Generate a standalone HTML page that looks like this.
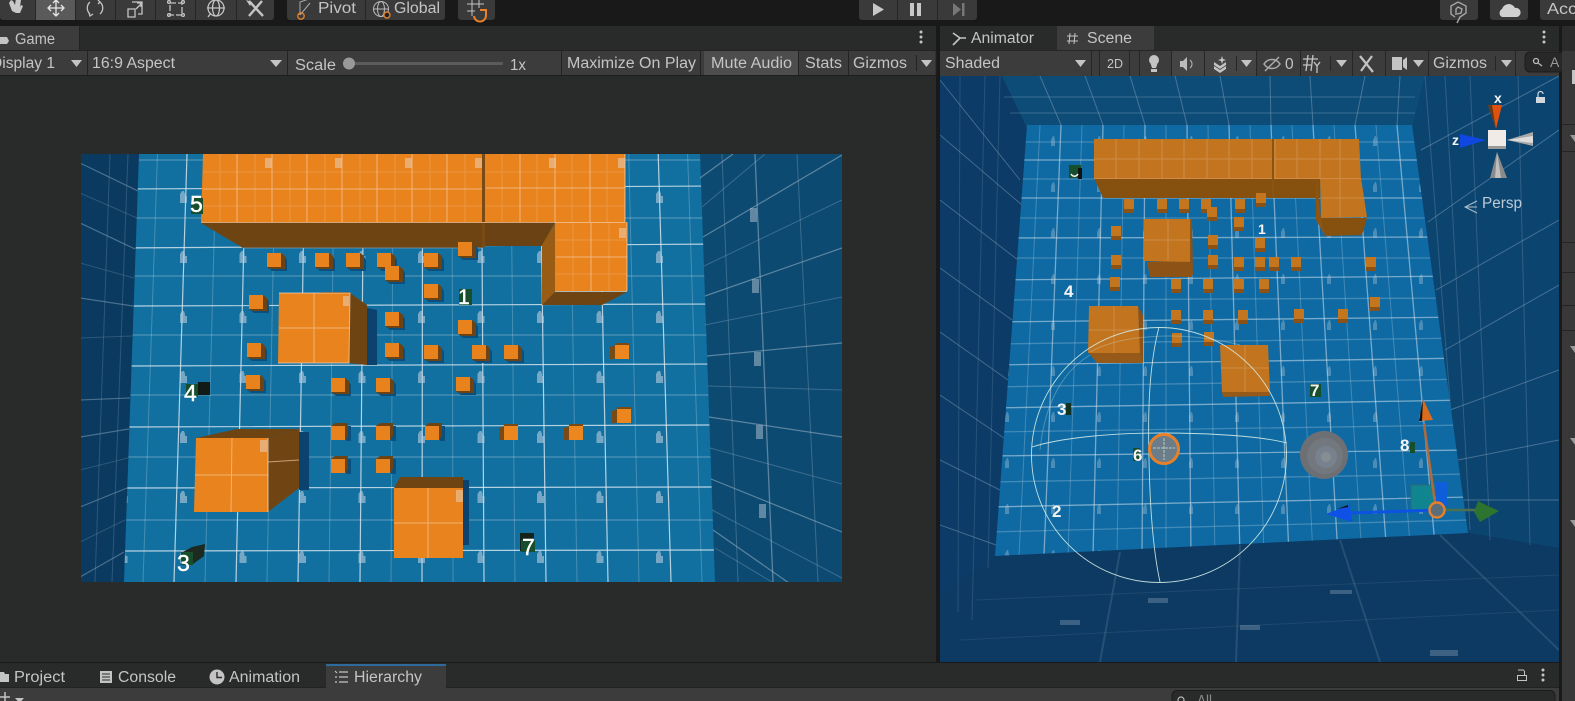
<!DOCTYPE html>
<html><head><meta charset="utf-8"><title>Unity Editor</title>
<style>
html,body{margin:0;padding:0;background:#191919;overflow:hidden;width:1575px;height:701px}
svg{display:block}
text{font-family:"Liberation Sans",sans-serif;fill:#c4c4c4;font-size:15.5px}
.n{font-weight:400;fill:#fff;font-size:23px;stroke:#fff;stroke-width:.4}
.s{fill:#f4f4f4;font-size:17px;font-weight:700}
</style></head><body>
<svg width="1575" height="701" viewBox="0 0 1575 701" xmlns="http://www.w3.org/2000/svg">
<defs>
<clipPath id="gv"><rect x="81" y="154" width="761" height="428"/></clipPath>
<clipPath id="gf"><path d="M139 154H700L715 582H124Z"/></clipPath>
<clipPath id="sv"><rect x="940" y="76" width="619" height="586"/></clipPath>
<clipPath id="sf"><path d="M1027 125H1412L1468 533L995 556Z"/></clipPath>
<pattern id="lk" x="153" y="168" width="59.500" height="60" patternUnits="userSpaceOnUse"><path d="M27 26l2-3h2l1 3v2h2v7h-7z" fill="#b9cddd" opacity=".6"/></pattern>
<pattern id="lk2" x="1030" y="118" width="46" height="46" patternUnits="userSpaceOnUse"><path d="M21 22l2-4h1l1 4v6h-4z" fill="#b9cddd" opacity=".35"/></pattern>
<g id="a"><path d="M-7-5H10L13 0V11H-2L-7 7Z" fill="#0c4f7c"/><path d="M7-7L11-4V9H-3L-7 7H7Z" fill="#6e4313"/><rect x="-7" y="-7" width="14" height="14" fill="#e8821c"/></g>
<g id="b"><path d="M8-7H13V8H8Z" fill="#0c4f7c"/><path d="M-7-7L-3-10H10V3L7 7V-7Z" fill="#6e4313"/><rect x="-7" y="-7" width="14" height="14" fill="#e8821c"/></g>
<g id="c"><path d="M-7-7L-12-5V7H-7ZM-7-7V-9H7V-7Z" fill="#7a4a14"/><rect x="-7" y="-7" width="14" height="14" fill="#ec861f"/></g>
<g id="d"><rect x="-5" y="3" width="10" height="5" fill="#8a5216"/><rect x="-5" y="-6" width="10" height="10" fill="#c4761f"/></g>
</defs>

<!-- Base -->
<rect width="1575" height="701" fill="#191919"/>

<!-- Top toolbar -->
<rect x="0" y="-3" width="274" height="23" rx="3" fill="#3a3a3a"/>
<rect x="36" y="-3" width="39" height="23" fill="#5a5a5a"/>
<g stroke="#262626"><path d="M35.500 0V20M75.500 0V20M115.500 0V20M155.500 0V20M195.500 0V20M236.500 0V20"/></g>
<path d="M9 3L12 11 16 13 20 13 23 6 21 5 20 7 21 0H18L17.500 -2 16 -2 15 5 13 1 11 0Z" fill="#c8c8c8"/>
<g fill="none" stroke="#e6e6e6" stroke-width="1.300"><path d="M56 1V15M49 8H63M53 3L56 0 59 3M53 13L56 16 59 13M51 5L48 8 51 11M61 5L64 8 61 11"/></g>
<g fill="none" stroke="#c4c4c4" stroke-width="1.300"><path d="M90 2A8 8 0 0 0 90 14M93 14L90 16 89 13M100 14A8 8 0 0 0 100 2M98 0L100 2 98 4"/>
<path d="M128 9V17H135V9ZM132 2H142V14H138M136 9L141 4M137 3H141V7"/>
<path d="M170 3H182V15H170Z" stroke-dasharray="6 2"/><circle cx="169" cy="2" r="1.400"/><circle cx="183" cy="2" r="1.400"/><circle cx="169" cy="15" r="1.400"/><circle cx="183" cy="15" r="1.400"/>
<circle cx="216" cy="8" r="8"/><ellipse cx="216" cy="8" rx="3.500" ry="8"/><path d="M207 8H225M208 17L211 13"/></g>
<g stroke="#c4c4c4" stroke-width="2.400"><path d="M249 1L263 16M262 1L249 16"/></g>
<path d="M246 0L252 2 250 6Z" fill="#c4c4c4"/>

<rect x="287" y="-3" width="158" height="23" rx="3" fill="#3a3a3a"/>
<path d="M365.500 0V20" stroke="#262626"/>
<path d="M300 15V2L309 -1M300 15L310 3" fill="none" stroke="#aaa"/><circle cx="301" cy="16" r="3.200" fill="none" stroke="#e0802a" stroke-width="1.400"/>
<text x="318" y="13" textLength="38" lengthAdjust="spacingAndGlyphs">Pivot</text>
<circle cx="381" cy="9" r="7.500" fill="none" stroke="#bbb"/><ellipse cx="381" cy="9" rx="3.500" ry="7.500" fill="none" stroke="#bbb"/><path d="M373.500 9H388.500" stroke="#bbb"/><circle cx="387" cy="15" r="3" fill="#222" stroke="#e0802a" stroke-width="1.400"/>
<text x="394" y="13" textLength="46" lengthAdjust="spacingAndGlyphs">Global</text>
<rect x="458" y="-3" width="37" height="23" rx="3" fill="#3a3a3a"/>
<g stroke="#c4c4c4" fill="none"><path d="M472 0V16M479 0V8M467 4H484M467 11H475"/></g>
<path d="M480 10H486V15A4 4 0 0 1 474 16" fill="none" stroke="#e8822a" stroke-width="2"/>

<rect x="859" y="-3" width="118" height="23" rx="3" fill="#3a3a3a"/>
<path d="M897.500 0V20M937.500 0V20" stroke="#262626"/>
<path d="M873 3L884 9.500 873 16Z" fill="#c8c8c8"/>
<path d="M910 3H914V16H910ZM917 3H921V16H917Z" fill="#c8c8c8"/>
<path d="M953 3L961 9.500 953 16Z" fill="#777"/><rect x="962" y="3" width="2.500" height="13" fill="#777"/>
<rect x="1440" y="-3" width="38" height="23" rx="3" fill="#3a3a3a"/>
<path d="M1458 2L1466 6V13L1460 17 1457 23M1458 2L1451 6V14L1455 17M1456 15V9L1458 7 1462 9 1461 13 1457 14" fill="none" stroke="#a6a6a6" stroke-width="1.400"/>
<rect x="1490" y="-3" width="38" height="23" rx="3" fill="#3a3a3a"/>
<path d="M1502 17A4.500 4.500 0 0 1 1502 9 7 7 0 0 1 1515 8 4.500 4.500 0 0 1 1517 17Z" fill="#d0d0d0"/>
<rect x="1540" y="-3" width="40" height="23" rx="3" fill="#3a3a3a"/>
<text x="1547" y="14" textLength="30" lengthAdjust="spacingAndGlyphs">Acc</text>

<!-- Game panel -->
<rect x="0" y="26" width="936" height="636" fill="#292b2b"/>
<rect x="0" y="26" width="79" height="25" fill="#3c3c3c"/>
<rect x="0" y="50" width="936" height="25" fill="#3c3c3c"/>
<path d="M0 50.500H936" stroke="#232323"/>
<path d="M0 75.500H936" stroke="#1d1d1d"/>
<path d="M79.500 27V50" stroke="#222"/>
<path d="M-3 37H7L9 41 7 44H-3Z" fill="#c4c4c4"/>
<text x="15" y="44" textLength="40" lengthAdjust="spacingAndGlyphs">Game</text>
<g fill="#c4c4c4"><circle cx="921" cy="32" r="1.500"/><circle cx="921" cy="37" r="1.500"/><circle cx="921" cy="42" r="1.500"/></g>
<text x="-9" y="68" textLength="64" lengthAdjust="spacingAndGlyphs">Display 1</text>
<path d="M71 60H82L76.500 67Z" fill="#c4c4c4"/>
<path d="M87.500 51V75M287.500 51V75M561.500 51V75M700.500 51V75M798.500 51V75M848.500 51V75M936 51V75" stroke="#232323"/>
<text x="92" y="68" textLength="83" lengthAdjust="spacingAndGlyphs">16:9 Aspect</text>
<path d="M270 60H282L276 67Z" fill="#c4c4c4"/>
<text x="295" y="70" textLength="41" lengthAdjust="spacingAndGlyphs">Scale</text>
<rect x="348" y="62" width="155" height="3" rx="1.500" fill="#5c5c5c"/>
<circle cx="349" cy="63.500" r="6" fill="#999"/>
<text x="510" y="70" textLength="16" lengthAdjust="spacingAndGlyphs">1x</text>
<text x="567" y="68" textLength="129" lengthAdjust="spacingAndGlyphs">Maximize On Play</text>
<rect x="704" y="51" width="94" height="24" fill="#4d4d4d"/>
<text x="711" y="68" textLength="81" lengthAdjust="spacingAndGlyphs">Mute Audio</text>
<text x="805" y="68" textLength="37" lengthAdjust="spacingAndGlyphs">Stats</text>
<text x="853" y="68" textLength="54" lengthAdjust="spacingAndGlyphs">Gizmos</text>
<path d="M916.500 55V71" stroke="#232323"/>
<path d="M921 60H932L926.500 67Z" fill="#c4c4c4"/>

<!-- GAME VIEW -->
<g clip-path="url(#gv)">
<rect x="81" y="154" width="761" height="428" fill="#0b3a60"/>
<rect x="700" y="154" width="142" height="428" fill="#0c4a72"/>
<!-- left wall lines -->
<g fill="none" stroke="#7f9db5" stroke-opacity=".55">
<path d="M80 163L138 191M80 223L135 249M80 298L133 306M80 400L130 398M80 437L129 429M80 507L127 488M80 577L124 552" stroke-width="1.200"/>
<path d="M80 193L137 218M80 263L134 278M80 338L132 336M80 470L128 458M80 542L125 520" stroke-opacity=".3"/>
<path d="M110 154L95 582M128 154L112 582" stroke-opacity=".3"/></g>
<path d="M139 154H700L715 582H124Z" fill="#11709f"/>
<g clip-path="url(#gf)">
<g stroke="#cfe0ea" stroke-opacity=".28" fill="none">
<path d="M157.500 154L143 582M216.400 154L205 582M275.300 154L267 582M334.200 154L329 582M393.100 154L391 582M452 154L453 582M510.900 154L515 582M569.800 154L577 582M628.700 154L639 582M687.600 154L702 582"/>
<path d="M120 160H720M120 218H720M120 276H720M120 335H720M120 395H720M120 457H720M120 520H720" stroke-width="1.400"/>
</g>
<g stroke="#dfeaf2" stroke-opacity=".8" fill="none" stroke-width="1.200">
<path d="M187 154L174 582M245.900 154L236 582M304.800 154L298 582M363.700 154L360 582M422.600 154L422 582M481.500 154L484 582M540.400 154L546 582M599.300 154L608 582M658.200 154L671 582"/>
<path d="M120 189L720 186M120 248L720 244M120 306L720 304M120 366L720 364M120 427L720 425M120 488L720 487M120 551L720 550"/>
</g>
<rect x="120" y="154" width="600" height="428" fill="url(#lk)"/>
</g>
<!-- right wall lines -->
<g fill="none" stroke="#93abbf" stroke-opacity=".6">
<path d="M700 178L733 154M703 237L842 155M705 296L842 248M707 356L842 343M709 417L842 437M711 479L842 532M713 530L842 620" stroke-width="1.200"/>
<path d="M702 207L765 154M704 266L842 200M705 325L842 297M708 386L842 390M710 448L842 484M712 510L842 578M715 548L772 582" stroke-opacity=".35"/>
<path d="M722 154L738 582M797 154L818 582" stroke-opacity=".35"/>
<path d="M755 154L773 582" stroke-width="1.300"/></g>
<g fill="#a8bccc" opacity=".55"><rect x="750" y="208" width="7" height="14"/><rect x="752" y="279" width="7" height="14"/><rect x="754" y="352" width="7" height="14"/><rect x="756" y="425" width="7" height="14"/><rect x="759" y="504" width="7" height="14"/></g>
<!-- long block -->
<path d="M201 223L243 248H483V222H201Z" fill="#6f4413"/>
<path d="M243 248H483" stroke="#7a9ab0" stroke-width=".8"/>
<path d="M484 222H555L542 246H484Z" fill="#6a4213"/>
<path d="M542 245L555 223V292L542 305Z" fill="#985c14"/>
<path d="M542 305L555 292H627L602 305Z" fill="#6f4413"/>
<path d="M203 154H483V222H201Z" fill="#e8831d"/>
<path d="M485 154H625V222H627V291H555V222H485Z" fill="#e8831d"/>
<rect x="482" y="154" width="3" height="93" fill="#7a4a14"/>
<g fill="none" stroke="#f3c79b" stroke-opacity=".3"><path d="M220 154V222M255 154V222M290 154V222M325 154V222M360 154V222M395 154V222M430 154V222M465 154V222M502 154V222M537 154V222M572 154V222M607 154V222M203 172H482M203 206H482M486 172H625M486 206H625M556 240H627M556 274H627M573 222V291M609 222V291"/></g>
<g fill="none" stroke="#f3c79b" stroke-opacity=".75"><path d="M237 154V222M272 154V222M307 154V222M342 154V222M377 154V222M412 154V222M447 154V222M520 154V222M555 154V222M590 154V222M203 189H482M486 188H625M201 222.500H625M591 222V291M556 257H627"/></g>
<path d="M625 154V222M627 222V291M555 291.500H627" stroke="#f5d9bd" stroke-opacity=".7"/>
<g fill="#e8c9ac" opacity=".6"><rect x="265" y="158" width="7" height="10"/><rect x="335" y="158" width="7" height="10"/><rect x="405" y="158" width="7" height="10"/><rect x="475" y="158" width="7" height="10"/><rect x="549" y="158" width="7" height="10"/><rect x="618" y="158" width="7" height="10"/><rect x="619" y="228" width="7" height="10"/></g>
<!-- cube 1 -->
<path d="M367 308L377 310V365H367Z" fill="#0c426e"/>
<path d="M350 293L367 305V365L349 363Z" fill="#6f4413"/>
<path d="M320 293L322 292H350V293Z" fill="#6f4413"/>
<path d="M279 293H350L349 363H278Z" fill="#e8831d"/>
<path d="M314 293V363M279 328H350" stroke="#f3c79b" stroke-opacity=".7"/>
<path d="M279 293H350L349 363H278" fill="none" stroke="#f5d9bd" stroke-opacity=".7"/>
<rect x="343" y="296" width="6" height="10" fill="#e8c9ac" opacity=".6"/>
<!-- cube 2 -->
<path d="M299 432H309V490L299 490Z" fill="#0c426e"/>
<path d="M196 438L237 429H299L268 438Z" fill="#6f4413"/>
<path d="M268 438L299 429V488L268 512Z" fill="#704513"/>
<path d="M196 438H268V512H194Z" fill="#e8831d"/>
<path d="M232 438L231 512M195 475H268M268 462L299 460" stroke="#f3c79b" stroke-opacity=".7"/>
<path d="M268 438V512" stroke="#f5d9bd" stroke-opacity=".8"/>
<rect x="260" y="440" width="7" height="12" fill="#e8c9ac" opacity=".6"/>
<!-- cube 3 -->
<path d="M463 480H469V545H463Z" fill="#0c426e"/>
<path d="M394 488L400 477H463V488Z" fill="#6f4413"/>
<path d="M394 488H463V558H394Z" fill="#e8831d"/>
<path d="M428 488V558M394 523H463" stroke="#f3c79b" stroke-opacity=".7"/>
<rect x="456" y="490" width="7" height="12" fill="#e8c9ac" opacity=".6"/>
<!-- small cubes -->
<use href="#a" x="274" y="260"/><use href="#a" x="322" y="260"/><use href="#a" x="353" y="260"/><use href="#a" x="384" y="260"/><use href="#a" x="392" y="273"/><use href="#a" x="431" y="260"/><use href="#a" x="465" y="249"/><use href="#a" x="431" y="291"/><use href="#a" x="392" y="319"/><use href="#a" x="465" y="327"/><use href="#a" x="256" y="302"/><use href="#a" x="254" y="350"/><use href="#a" x="392" y="350"/><use href="#a" x="431" y="352"/><use href="#a" x="479" y="352"/><use href="#a" x="511" y="352"/><use href="#a" x="253" y="382"/><use href="#a" x="338" y="385"/><use href="#a" x="383" y="385"/><use href="#a" x="463" y="384"/>
<use href="#c" x="622" y="352"/><use href="#c" x="624" y="416"/>
<use href="#b" x="338" y="433"/><use href="#b" x="383" y="433"/><use href="#b" x="432" y="433"/><use href="#b" x="338" y="466"/><use href="#b" x="383" y="466"/>
<use href="#c" x="576" y="433"/><use href="#c" x="511" y="433"/>
<!-- labels -->
<rect x="459" y="289" width="13" height="16" fill="#174f2c"/><text class="n" x="458" y="304" style="font-size:21px">1</text>
<rect x="191" y="198" width="12" height="16" fill="#174f2c"/><text class="n" x="190" y="212">5</text>
<rect x="186" y="384" width="12" height="13" fill="#174f2c"/><rect x="198" y="382" width="12" height="13" fill="#111a15"/><text class="n" x="184" y="401">4</text>
<path d="M181 553L192 547 205 544 204 556 193 564H181Z" fill="#1c2a22"/><rect x="181" y="552" width="12" height="13" fill="#174f2c"/><text class="n" x="177" y="571">3</text>
<rect x="520" y="533" width="14" height="18" fill="#14241b"/><rect x="521" y="540" width="14" height="12" fill="#174f2c"/><text class="n" x="522" y="555">7</text>
</g>

<!-- Scene panel -->
<rect x="940" y="26" width="619" height="25" fill="#292b2b"/>
<rect x="1057" y="26" width="97" height="25" fill="#3c3c3c"/>
<path d="M953 33L960 38H966M953 45L960 38" fill="none" stroke="#c4c4c4" stroke-width="1.600"/>
<text x="971" y="43" textLength="63" lengthAdjust="spacingAndGlyphs">Animator</text>
<path d="M1070 33L1069 44M1075 33L1074 44M1067 36H1078M1067 41H1078" stroke="#c4c4c4"/>
<text x="1087" y="43" textLength="45" lengthAdjust="spacingAndGlyphs">Scene</text>
<g fill="#c4c4c4"><circle cx="1544" cy="32" r="1.500"/><circle cx="1544" cy="37" r="1.500"/><circle cx="1544" cy="42" r="1.500"/></g>
<rect x="940" y="50" width="619" height="26" fill="#3c3c3c"/>
<rect x="1171" y="51" width="85" height="25" fill="#444"/>
<path d="M940 50.500H1559M1091.500 51V76M1099.500 51V76M1129.500 51V76M1139.500 51V76M1171.500 51V76M1204.500 51V76M1256.500 51V76M1300.500 51V76M1352.500 51V76M1385.500 51V76M1428.500 51V76M1515.500 51V76" stroke="#262626"/>
<path d="M1236.500 56V71M1330.500 56V71M1495.500 56V71" stroke="#262626"/>
<text x="945" y="68" textLength="55" lengthAdjust="spacingAndGlyphs">Shaded</text>
<path d="M1075 60H1086L1080.500 67Z" fill="#c4c4c4"/>
<text x="1107" y="68" textLength="16" lengthAdjust="spacingAndGlyphs" style="font-size:13px">2D</text>
<circle cx="1154" cy="60" r="5" fill="#c4c4c4"/><path d="M1150 62L1152 68H1156L1158 62Z" fill="#c4c4c4"/><rect x="1151" y="69" width="6" height="3" fill="#c4c4c4"/>
<path d="M1180 61H1183L1187 57V71L1183 67H1180Z" fill="#bbb"/><path d="M1190 60A5 5 0 0 1 1190 68" fill="none" stroke="#bbb"/>
<path d="M1214 62L1220 66 1226 62 1226 65 1220 69 1214 65ZM1214 66L1220 70 1226 66V69L1220 73 1214 69ZM1222 56L1223 59 1226 60 1223 61 1222 64 1221 61 1218 60 1221 59Z" fill="#c4c4c4"/>
<path d="M1241 60H1252L1246.500 67Z" fill="#c4c4c4"/>
<path d="M1264 64C1268 58 1276 58 1280 64 1276 70 1268 70 1264 64ZM1265 71L1279 57" fill="none" stroke="#aaa" stroke-width="1.500"/>
<text x="1285" y="69" textLength="9">0</text>
<path d="M1308 55L1306 71M1313 55L1311 71M1303 59H1318M1303 65H1311M1314 62L1317 66 1320 62M1317 66V73" fill="none" stroke="#c4c4c4" stroke-width="1.300"/>
<path d="M1336 60H1347L1341.500 67Z" fill="#c4c4c4"/>
<path d="M1360 56L1373 72M1372 56L1361 71" stroke="#c4c4c4" stroke-width="2.200"/>
<path d="M1392 57H1402V70H1392ZM1403 60L1407 57V70L1403 67Z" fill="#c4c4c4"/>
<path d="M1413 60H1424L1418.500 67Z" fill="#c4c4c4"/>
<text x="1433" y="68" textLength="54" lengthAdjust="spacingAndGlyphs">Gizmos</text>
<path d="M1501 60H1512L1506.500 67Z" fill="#c4c4c4"/>
<rect x="1525" y="52" width="40" height="20" rx="5" fill="#282828" stroke="#1c1c1c"/>
<circle cx="1536" cy="61" r="2.500" fill="none" stroke="#bbb" stroke-width="1.300"/><path d="M1538 63L1542 66" stroke="#bbb" stroke-width="1.300"/>
<text x="1550" y="67" style="fill:#999;font-size:14px">A</text>

<!-- SCENE VIEW -->
<g clip-path="url(#sv)">
<rect x="940" y="76" width="619" height="586" fill="#0b3b66"/>
<path d="M1002 76H1425L1412 128H1027Z" fill="#0e4c78"/>
<path d="M1412 128L1425 76H1559V548L1468 533Z" fill="#0c4470"/>
<path d="M940 596L995 556 1468 533 1559 548V662H940Z" fill="#0d3a62"/>
<!-- wall lines -->
<g fill="none" stroke="#9cb4c8" stroke-opacity=".4">
<path d="M1004 97H1415M1010 113H1415" stroke-opacity=".3"/>
<path d="M1040 76L1061 125M1085 76L1103 125M1130 76L1145 125M1175 76L1187 125M1220 76L1229 125M1270 76L1271 125M1310 76L1313 125M1365 76L1355 125M1400 76L1397 125"/>
<path d="M940 80L1020 180M940 135L1022 205M940 200L1018 260M940 268L1012 320M940 332L1008 380M940 395L1004 438M940 460L1000 490M940 525L996 545"/>
<path d="M985 76L972 620M960 76L958 612M1000 76L988 568" stroke-opacity=".2"/>
<path d="M1421 150L1559 76M1428 222L1559 130M1436 290L1559 220M1445 350L1559 285M1450 410L1559 370M1458 460L1559 440M1462 500L1559 500"/>
<path d="M1425 76L1460 530M1470 76L1490 540M1518 76L1530 545M1445 76L1470 530" stroke-opacity=".25"/>
<path d="M1120 552L1100 662M1240 545L1236 662M1340 540L1380 662M1440 535L1559 650" stroke-opacity=".18" stroke-width="2"/>
<path d="M960 640L1559 610M975 600L1559 575" stroke-opacity=".12"/>
</g>
<g fill="#a8bccc" opacity=".3"><rect x="1148" y="598" width="20" height="5"/><rect x="1240" y="625" width="20" height="5"/><rect x="1330" y="590" width="22" height="4"/><rect x="1430" y="650" width="28" height="6"/><rect x="1060" y="620" width="20" height="5"/></g>
<path d="M1027 125H1412L1468 533L995 556Z" fill="#0f6aa3"/>
<g clip-path="url(#sf)">
<g stroke="#d7e6f1" stroke-opacity=".25" fill="none">
<path d="M1040 125L1019 556M1082 125L1068 556M1124 125L1117 556M1166 125L1166 556M1208 125L1215 556M1250 125L1264 556M1292 125L1313 556M1334 125L1362 556M1376 125L1411 556"/>
<path d="M990 142H1470M990 179H1470M990 218H1470M990 258H1470M990 300L1470 298M990 344L1470 338M990 387L1470 379M990 432L1470 425M990 482L1470 474M990 532L1470 520" stroke-width="1.300"/>
</g>
<g stroke="#dfeaf2" stroke-opacity=".5" fill="none" stroke-width="1.300">
<path d="M1061 125L1044 556M1103 125L1093 556M1145 125L1142 556M1187 125L1191 556M1229 125L1240 556M1271 125L1289 556M1313 125L1338 556M1355 125L1387 556M1397 125L1436 556"/>
<path d="M990 160H1470M990 198H1470M990 238L1470 237M990 280L1470 276M990 322L1470 317M990 365L1470 358M990 408L1470 400M990 456L1470 450M990 507L1470 497"/>
</g>
<rect x="990" y="118" width="480" height="440" fill="url(#lk2)"/>
</g>
<!-- long block -->
<path d="M1094 178L1103 198H1320V178Z" fill="#86500f"/>
<path d="M1094 139H1359L1361 179H1320V179H1094Z" fill="#c2741f"/>
<path d="M1320 178H1361L1367 217 1321 218Z" fill="#c2741f"/>
<path d="M1321 218H1367L1362 235 1325 236Z" fill="#86500f"/>
<path d="M1316 178L1321 218 1325 236 1316 220Z" fill="#8e5512"/>
<g stroke="#e0a878" stroke-opacity=".45" fill="none"><path d="M1116 139V178M1139 139V179M1162 139V178M1184 139V179M1207 139V178M1229 139V179M1252 139V178M1275 139V179M1297 139V178M1320 139V178M1340 139V217M1094 159H1359M1094 178.500H1361M1322 198H1365"/></g>
<path d="M1273 139V197" stroke="#8a5415" stroke-width="2"/>
<!-- cubes -->
<path d="M1147 262L1150 277H1192V260Z" fill="#8d5316"/>
<path d="M1144 219H1192V262L1144 261Z" fill="#c2741f"/>
<path d="M1168 219V261M1144 240H1192" stroke="#e0a878" stroke-opacity=".45"/>
<path d="M1190 219L1192 219 1193 275H1190Z" fill="#8d5316"/>
<path d="M1089 353L1097 363H1143L1140 353Z" fill="#95591a"/>
<path d="M1138 306L1143 315V363L1140 353Z" fill="#8d5316"/>
<path d="M1089 306H1138L1140 353H1088Z" fill="#c2741f"/>
<path d="M1114 306V353M1089 330H1139" stroke="#e0a878" stroke-opacity=".45"/>
<path d="M1222 392H1270L1270 396 1223 397Z" fill="#95591a"/>
<path d="M1220 345H1268L1270 392H1222Z" fill="#c2741f"/>
<path d="M1245 345V392M1221 368H1269" stroke="#e0a878" stroke-opacity=".45"/>
<!-- small -->
<use href="#d" x="1129" y="205"/><use href="#d" x="1162" y="205"/><use href="#d" x="1184" y="205"/><use href="#d" x="1206" y="205"/><use href="#d" x="1212" y="213"/><use href="#d" x="1240" y="205"/><use href="#d" x="1261" y="199"/><use href="#d" x="1239" y="223"/>
<use href="#d" x="1116" y="232"/><use href="#d" x="1116" y="261"/><use href="#d" x="1115" y="283"/><use href="#d" x="1213" y="241"/><use href="#d" x="1213" y="261"/><use href="#d" x="1239" y="263"/><use href="#d" x="1260" y="244"/><use href="#d" x="1260" y="263"/><use href="#d" x="1274" y="263"/><use href="#d" x="1296" y="263"/><use href="#d" x="1371" y="263"/>
<use href="#d" x="1176" y="285"/><use href="#d" x="1208" y="285"/><use href="#d" x="1239" y="285"/><use href="#d" x="1264" y="285"/>
<use href="#d" x="1176" y="316"/><use href="#d" x="1208" y="316"/><use href="#d" x="1243" y="316"/><use href="#d" x="1299" y="315"/><use href="#d" x="1343" y="315"/><use href="#d" x="1375" y="303"/>
<use href="#d" x="1177" y="339"/><use href="#d" x="1209" y="338"/>
<!-- sphere gizmo -->
<g fill="none" stroke="#d3ebe6" stroke-width=".9" stroke-opacity=".9">
<circle cx="1159" cy="455" r="127.500"/>
<path d="M1032 447C1060 438 1110 433 1159 433C1210 433 1260 436 1287 443"/>
<path d="M1159 327C1148 370 1148 420 1149 460C1150 510 1153 550 1160 582"/>
</g>
<path d="M1090 352C1120 335 1180 330 1240 345M1040 450C1045 400 1065 370 1090 355" fill="none" stroke="#d3ebe6" stroke-opacity=".3"/>
<circle cx="1164" cy="449" r="14.500" fill="#6b7d89" stroke="#e8802a" stroke-width="3"/>
<path d="M1153 448H1175M1164 438V460" stroke="#cfe0d8" stroke-width=".8" stroke-dasharray="3 1"/>
<!-- gray sphere -->
<circle cx="1324" cy="455" r="24" fill="#6c7074"/><circle cx="1325" cy="456" r="18" fill="#72787e"/><circle cx="1326" cy="457" r="11" fill="#78828e"/><circle cx="1326" cy="457" r="5" fill="#868e94"/>
<!-- move gizmo -->
<rect x="1411" y="485" width="24" height="25" fill="#11858f" stroke="#2c6a70"/>
<rect x="1436" y="482" width="11" height="24" fill="#0d5ed8"/>
<path d="M1436 510L1424 424" stroke="#b06a3c" stroke-width="2.500"/>
<path d="M1423 399L1433 420 1419 421Z" fill="#d96d1d"/><path d="M1423 399L1419 421 1422 421Z" fill="#111"/>
<path d="M1437 510L1350 513" stroke="#0d52e0" stroke-width="3"/>
<path d="M1326 514L1350 505 1352 522Z" fill="#0f50e6"/><path d="M1337 509L1348 505V507Z" fill="#111"/>
<path d="M1437 510H1476" stroke="#4e7050" stroke-width="2.500"/>
<path d="M1499 511L1478 501 1474 512 1480 522Z" fill="#2c7430"/><path d="M1480 502L1499 511 1486 505Z" fill="#111"/>
<circle cx="1437" cy="510" r="7.500" fill="#5c6e7a" stroke="#e8802a" stroke-width="2.400"/>
<!-- labels -->
<rect x="1069" y="165" width="12" height="13" fill="#174f2c"/><rect x="1078" y="168" width="4" height="11" fill="#111"/><path d="M1071 174C1073 177 1076 177 1078 174" fill="none" stroke="#fff" stroke-width="1.500"/>
<text class="s" x="1258" y="234" style="font-size:14px">1</text>
<text class="s" x="1064" y="297">4</text>
<rect x="1066" y="403" width="5" height="12" fill="#132"/><text class="s" x="1057" y="415">3</text>
<rect x="1310" y="384" width="11" height="13" fill="#174f2c"/><text class="s" x="1310" y="396">7</text>
<rect x="1133" y="448" width="7" height="13" fill="#174f2c"/><text class="s" x="1133" y="461">6</text>
<rect x="1410" y="442" width="5" height="11" fill="#174f2c"/><text class="s" x="1400" y="451">8</text>
<text class="s" x="1052" y="517">2</text>
<!-- axis gizmo -->
<path d="M1488 105H1502L1496 129Z" fill="#e0500f"/>
<path d="M1488 105H1492L1496 129Z" fill="#6b3a14"/>
<path d="M1460 134L1486 140 1460 148Z" fill="#0f47e0"/>
<path d="M1507 140L1533 132V146Z" fill="#a8a8a8"/><path d="M1507 140L1533 136V143Z" fill="#dcdcdc"/>
<path d="M1497 152L1490 178H1507Z" fill="#8a8a8a"/><path d="M1497 152L1495 178H1501Z" fill="#c0c0c0"/>
<path d="M1488 130H1506V148L1504 149H1488Z" fill="#f0ebe6"/><path d="M1488 146H1506V149H1488Z" fill="#999"/>
<text class="s" x="1494" y="103" style="font-size:14px">x</text>
<text class="s" x="1452" y="145" style="font-size:14px">z</text>
<path d="M1477 201L1465 207 1477 213M1465 207H1477" fill="none" stroke="#aebfcc"/>
<text x="1482" y="208" textLength="40" lengthAdjust="spacingAndGlyphs" style="fill:#bccad6;font-size:15.5px">Persp</text>
<rect x="1536" y="97" width="9" height="6" fill="#d0d8de"/><path d="M1538 97V94A2.500 2.500 0 0 1 1543 94" fill="none" stroke="#d0d8de" stroke-width="1.200"/>
</g>

<!-- Right sidebar -->
<rect x="1562" y="26" width="13" height="675" fill="#383838"/>
<rect x="1562" y="26" width="13" height="25" fill="#2b2b2b"/>
<path d="M1572 70H1576V84H1572Z" fill="#c4c4c4"/>
<path d="M1562 124.500H1575M1562 151.500H1575M1562 242.500H1575M1562 272.500H1575M1562 305.500H1575M1562 330.500H1575" stroke="#242424"/>
<path d="M1570 135L1575 135 1575 142Z" fill="#999"/>
<path d="M1570 346L1575 346 1575 353Z" fill="#999"/><path d="M1570 438L1575 438 1575 445Z" fill="#999"/><path d="M1570 520L1575 520 1575 527Z" fill="#999"/>

<!-- Bottom panel -->
<rect x="0" y="663" width="1559" height="38" fill="#292b2b"/>
<rect x="0" y="688" width="1559" height="13" fill="#3c3c3c"/>
<path d="M0 687.500H1559" stroke="#222"/>
<rect x="326" y="664" width="120" height="24" fill="#3c3c3c"/>
<rect x="326" y="664" width="120" height="2" fill="#2f6a9c"/>
<path d="M0 672H4L5 674H9V682H0Z" fill="#c4c4c4"/>
<text x="14" y="682" textLength="51" lengthAdjust="spacingAndGlyphs">Project</text>
<path d="M100 671H112V683H100Z" fill="#c4c4c4"/><path d="M102 674H110M102 677H110M102 680H110" stroke="#292b2b"/>
<text x="118" y="682" textLength="58" lengthAdjust="spacingAndGlyphs">Console</text>
<circle cx="217" cy="677" r="7.500" fill="#c4c4c4"/><path d="M217 672V677.500H222" fill="none" stroke="#292b2b" stroke-width="1.400"/>
<text x="229" y="682" textLength="71" lengthAdjust="spacingAndGlyphs">Animation</text>
<path d="M339 672H348M339 677H348M339 682H348M335 671L337 673M335 677H337M335 682H337" stroke="#c4c4c4" stroke-width="1.200"/>
<text x="354" y="682" textLength="68" lengthAdjust="spacingAndGlyphs">Hierarchy</text>
<rect x="1517.500" y="675.500" width="9" height="5" fill="none" stroke="#c4c4c4"/><path d="M1518 670H1522A2 2 0 0 1 1524.500 672V675" fill="none" stroke="#c4c4c4"/>
<g fill="#c4c4c4"><circle cx="1543" cy="670" r="1.500"/><circle cx="1543" cy="675" r="1.500"/><circle cx="1543" cy="680" r="1.500"/></g>
<path d="M5 692V701M0 697H10" stroke="#c4c4c4" stroke-width="1.500"/>
<path d="M15 698H24L19.500 703Z" fill="#c4c4c4"/>
<rect x="1172" y="690.500" width="383" height="20" rx="5" fill="#292b2b" stroke="#1c1c1c"/>
<circle cx="1181" cy="700" r="3" fill="none" stroke="#bbb" stroke-width="1.200"/>
<text x="1197" y="706" textLength="15" lengthAdjust="spacingAndGlyphs" style="fill:#8a8a8a">All</text>
</svg>
</body></html>
